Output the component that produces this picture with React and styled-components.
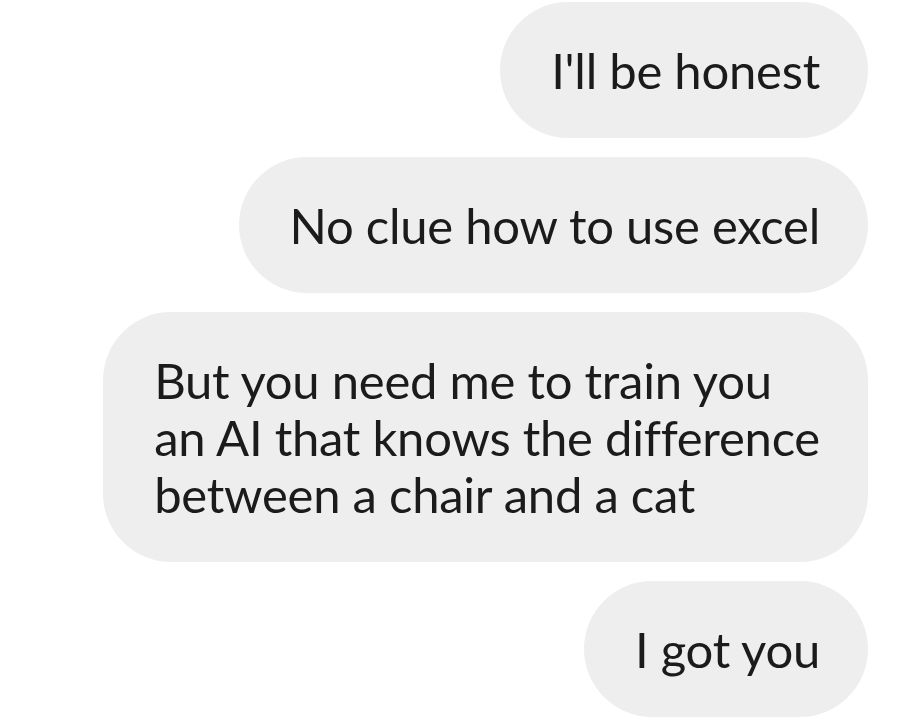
import React from "react";
import styled, { createGlobalStyle } from "styled-components";

const Global = createGlobalStyle`
  html, body { margin: 0; padding: 0; background: #ffffff; }
  body { font-family: Lato, "Open Sans", sans-serif; }
`;

const Thread = styled.div`
  display: flex;
  flex-direction: column;
  align-items: flex-end;
  gap: 19px;
  padding: 2px 43px 0 0;
`;

const Bubble = styled.div`
  background: #eeeeee;
  color: #1b1b1b;
  font-family: Lato, "Open Sans", sans-serif;
  font-size: 49px;
  line-height: 57px;
  letter-spacing: -0.25px;
  padding: 39.5px 48px 39.5px 51px;
  border-radius: 68px;
  white-space: pre-line;
`;

const messages = [
  "I'll be honest",
  "No clue how to use excel",
  "But you need me to train you\nan AI that knows the difference\nbetween a chair and a cat",
  "I got you",
];

export default function App() {
  return (
    <>
      <Global />
      <Thread>
        {messages.map((m, i) => (
          <Bubble key={i}>{m}</Bubble>
        ))}
      </Thread>
    </>
  );
}
